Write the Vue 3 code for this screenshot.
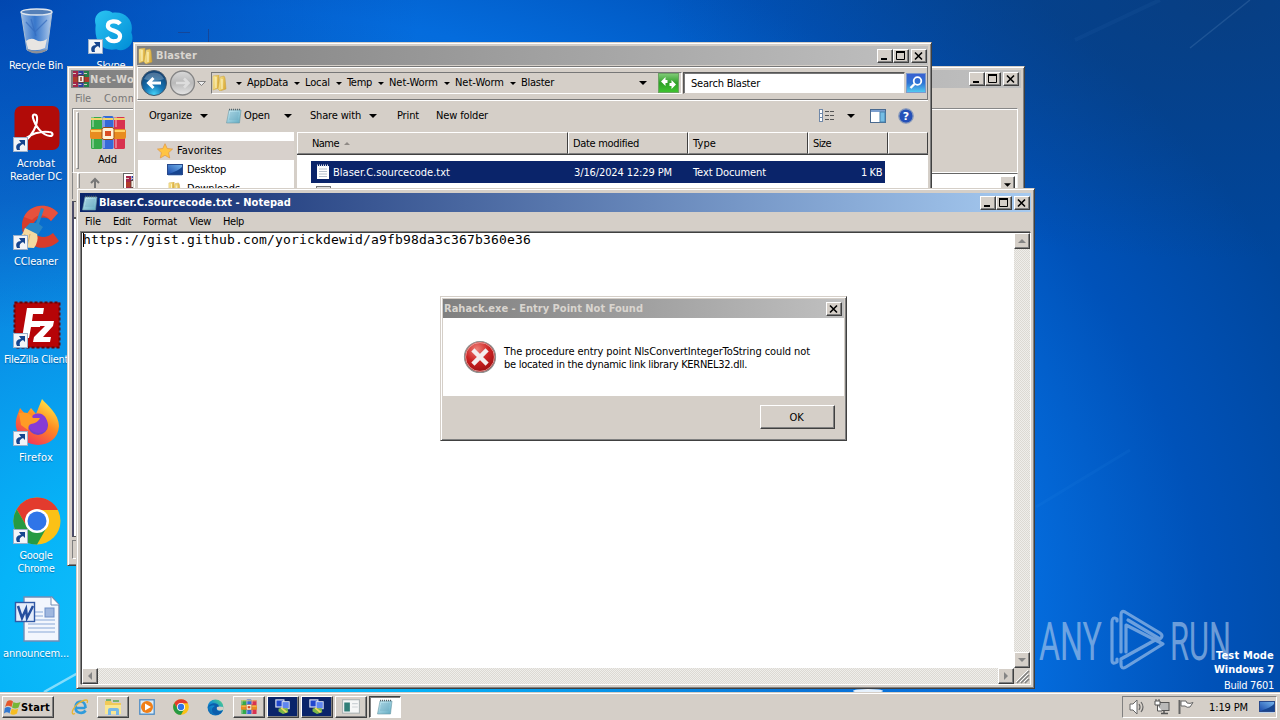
<script setup>
const fit = (el, { value }) => {
  el.style.letterSpacing = '0px'
  const range = document.createRange()
  range.selectNodeContents(el)
  const natural = range.getBoundingClientRect().width
  const count = el.textContent.length
  el.style.letterSpacing = (value - natural) / count + 'px'
  el.style.width = value + 'px'
}
const vFit = { mounted: fit }

const shortcuts = [
  { id: 'bin', lines: [['Recycle Bin', 54]] },
  { id: 'acrobat', link: true, lines: [['Acrobat', 38], ['Reader DC', 52]] },
  { id: 'ccleaner', link: true, lines: [['CCleaner', 44]] },
  { id: 'filezilla', link: true, lines: [['FileZilla Client', 64]] },
  { id: 'firefox', link: true, lines: [['Firefox', 34]] },
  { id: 'chrome', link: true, lines: [['Google', 33], ['Chrome', 37]] },
  { id: 'word', lines: [['announcem...', 66]] },
]
const crumbs = [['AppData', 41], ['Local', 25], ['Temp', 25], ['Net-Worm', 49], ['Net-Worm', 49], ['Blaster', 33]]
const menus = [['File', 16], ['Edit', 18], ['Format', 34], ['View', 22], ['Help', 21]]
const tasks = [
  { id: 'rar', cls: '' },
  { id: 'remote', cls: 'navy' },
  { id: 'remote', cls: 'navy' },
  { id: 'console', cls: '' },
  { id: 'note', cls: 'pressed' },
]
</script>

<template>
  <main class="desktop">
    <svg class="defs" width="0" height="0">
      <defs>
        <linearGradient id="gFolder" x1="0" x2="1" y1="0" y2="0.3"><stop offset="0" stop-color="#fff3a8" /><stop offset="1" stop-color="#dcae3c" /></linearGradient>
        <linearGradient id="gNote" x1="0" x2="1" y1="0" y2="1"><stop offset="0" stop-color="#cdeef8" /><stop offset="1" stop-color="#5fa9c0" /></linearGradient>
        <linearGradient id="gGlass" x1="0" x2="1"><stop offset="0" stop-color="#cfe2f5" stop-opacity=".75" /><stop offset=".45" stop-color="#5c93d8" stop-opacity=".6" /><stop offset="1" stop-color="#e4effa" stop-opacity=".8" /></linearGradient>
        <linearGradient id="gScreen" x1="0" x2="1" y1="1" y2="0"><stop offset="0" stop-color="#1747a8" /><stop offset="1" stop-color="#77b8ee" /></linearGradient>
        <linearGradient id="gSkype" x1="0" x2="1" y1="0" y2="1"><stop offset="0" stop-color="#2bc4f2" /><stop offset="1" stop-color="#008cd6" /></linearGradient>
        <linearGradient id="gFox" x1=".8" x2=".2" y1="0" y2="1"><stop offset="0" stop-color="#fff04a" /><stop offset=".45" stop-color="#ff8b22" /><stop offset="1" stop-color="#f02b5f" /></linearGradient>
        <linearGradient id="gEdge" x1="0" x2="1" y1="1" y2="0"><stop offset="0" stop-color="#0d59a6" /><stop offset=".5" stop-color="#1391d3" /><stop offset="1" stop-color="#5adb7b" /></linearGradient>
        <radialGradient id="gBack" cx=".5" cy=".95" r=".85"><stop offset="0" stop-color="#45d3f8" /><stop offset=".45" stop-color="#1574b4" /><stop offset="1" stop-color="#104376" /></radialGradient>
        <linearGradient id="gFwd" x1="0" x2="0" y1="0" y2="1"><stop offset="0" stop-color="#d9d9d9" /><stop offset=".5" stop-color="#b9b9b9" /><stop offset="1" stop-color="#e6e6e6" /></linearGradient>
        <radialGradient id="gErr" cx=".4" cy=".25" r=".8"><stop offset="0" stop-color="#ee8078" /><stop offset=".5" stop-color="#cc2222" /><stop offset="1" stop-color="#970d10" /></radialGradient>
        <linearGradient id="gGreen" x1="0" x2="0" y1="0" y2="1"><stop offset="0" stop-color="#82cc79" /><stop offset=".5" stop-color="#2fa028" /><stop offset="1" stop-color="#3fc42f" /></linearGradient>
        <linearGradient id="gFind" x1="0" x2="0" y1="0" y2="1"><stop offset="0" stop-color="#3a5fd0" /><stop offset=".5" stop-color="#2f74d4" /><stop offset="1" stop-color="#54cdf2" /></linearGradient>

        <symbol id="bin" viewBox="0 0 48 48">
          <path d="M8 5 39 5 34 43Q24 48 14 43Z" fill="url(#gGlass)" stroke="#a9bdd2" stroke-width="1" />
          <path d="M13 34Q18 30 23 33T34 32L32 41Q23 45 15 42Z" fill="#e8e5e2" />
          <path d="M13 15 22 25 34 13M18 12 23 29" stroke="#356bbd" stroke-width="1.2" fill="none" opacity=".7" />
          <path d="M14 42Q23 46 34 42L33 44Q23 49 15 44Z" fill="#8c9098" />
          <ellipse cx="23.500" cy="5" rx="15.500" ry="3" fill="#5580b8" stroke="#dfe6ee" stroke-width="1.300" />
        </symbol>
        <symbol id="skype" viewBox="0 0 48 48">
          <path d="M5 17C1 4 15-2 23 4 38 2 46 14 43 25 48 37 37 47 27 43 11 46 3 34 5 17Z" fill="url(#gSkype)" />
          <path d="M31 16C28 12 18 12 18 18S31 22 31 29 20 36 17 30" stroke="#fff" stroke-width="4.500" fill="none" />
        </symbol>
        <symbol id="acrobat" viewBox="0 0 48 48">
          <rect x="1.500" y="1" width="45" height="44" rx="7" fill="#b10b08" />
          <path d="M11 37C19 31 25 20 24 12 23 8 19 9 20 13 22 21 29 30 37 31 41 31 40 27 36 27 28 26 19 29 13 33 8 36 8 40 11 37Z" fill="none" stroke="#fff" stroke-width="2.100" />
        </symbol>
        <symbol id="ccleaner" viewBox="0 0 48 48">
          <path d="M45 10C33-4 9 3 9 23S31 52 46 38L40 30C31 38 20 33 20 24S32 11 38 18Z" fill="#d83c2b" />
          <path d="M45 10C35-2 16 2 11 14L19 17C25 10 33 11 38 18Z" fill="#ec5a45" opacity=".7" />
          <path d="M28 5 31 6 26 21 30 24 24 33 10 27 17 20 23 20Z" fill="#2886c7" />
          <path d="M12 25 24 31Q26 38 21 45L3 44Q0 41 0 38Q9 35 12 25Z" fill="#f4d9a0" />
          <path d="M12 31 8 42M17 31 14 44" stroke="#d5ae6c" />
        </symbol>
        <symbol id="filezilla" viewBox="0 0 48 48">
          <rect x="1.500" y="1.500" width="45" height="45" fill="#b60407" stroke="#6a0205" stroke-width="2" stroke-dasharray="3 2" />
          <rect x="3" y="3" width="42" height="42" fill="#b60407" />
          <path d="M9 37 14 7H31L30 13H20L19 20H28L27 26H18L16 37ZM24 20H41L40 25 30 36H38L37 41H20L21 36 32 25H23Z" fill="#fff" />
        </symbol>
        <symbol id="firefox" viewBox="0 0 48 48">
          <path d="M7 9 13 16 18 9 23 15 29 0C34 6 46 15 46 27 45 51 8 53 3 28 2 20 5 15 7 9Z" fill="url(#gFox)" />
          <circle cx="25" cy="26" r="10" fill="#7041c9" />
          <path d="M20 16C30 11 36 20 34 29 32 36 17 36 16 26Z" fill="#873bd5" />
          <path d="M6 14Q16 12 20 19L27 19Q25 24 18 25 15 26 15 31L8 26Z" fill="#ff9b25" />
        </symbol>
        <symbol id="chrome" viewBox="0 0 48 48">
          <circle cx="24" cy="24" r="23.500" fill="#fbc116" />
          <path d="M24 .5A23.500 23.500 0 0 1 45 13H24L14 30 3.700 12.200A23.500 23.500 0 0 1 24 .5Z" fill="#e33b2e" />
          <path d="M3.700 12.200 14 30 34 30 24 47.500A23.500 23.500 0 0 1 3.700 12.200Z" fill="#269a43" />
          <circle cx="24" cy="24" r="12" fill="#fff" /><circle cx="24" cy="24" r="9.500" fill="#2f75e8" />
        </symbol>
        <symbol id="word" viewBox="0 0 48 48">
          <path d="M11 2H39L46 10V46H11Z" fill="#f2f6fd" stroke="#738db5" stroke-width="1.400" />
          <path d="M38 2V10H46" fill="#fff" stroke="#738db5" />
          <path d="M22 17H30M22 21H30M15 25H42M15 29H42M15 33H42M15 37H42" stroke="#87a7d7" stroke-width="1.200" />
          <rect x="32" y="13" width="9" height="9" fill="#9fb7df" stroke="#6f8fc7" />
          <rect x="2.500" y="7.500" width="19" height="19" fill="#e5edfb" stroke="#3159a6" stroke-width="1.400" />
          <path d="M5 11 9 23 13 14 14 23 20 11" fill="none" stroke="#264f9e" stroke-width="2.500" />
        </symbol>
        <symbol id="rar" viewBox="0 0 36 36">
          <rect x="1" y="2" width="11" height="32" rx="1.500" fill="#35a94a" /><rect x="12.500" y="1" width="11" height="33" rx="1.500" fill="#3569d8" /><rect x="24" y="2" width="11" height="32" rx="1.500" fill="#d8324f" />
          <path d="M3 2V12M14 2V12M26 2V12M3 24V33M14 24V33M26 24V33" stroke="#fff" stroke-opacity=".35" stroke-width="2" />
          <path d="M1 4H12M12.500 4H23M24 4H35" stroke="#f2d36c" stroke-width="2" />
          <rect x="0" y="14" width="36" height="10" rx="2" fill="#e88c20" /><path d="M1 16H35" stroke="#ffd267" stroke-width="2" />
          <rect x="12" y="12.500" width="12" height="12" rx="2" fill="#fff2d5" stroke="#9e4d10" /><rect x="15" y="16" width="6" height="5" fill="#d94d24" />
        </symbol>
        <symbol id="rarsmall" viewBox="0 0 16 16">
          <rect x="0" y="0" width="5" height="16" fill="#a3264a" /><rect x="5.500" y="0" width="5" height="16" fill="#2d3f9f" /><rect x="11" y="0" width="5" height="16" fill="#26804a" />
          <path d="M0 2.500H16M0 13.500H16" stroke="#d9c9c0" stroke-width="1" stroke-dasharray="3 2.500" /><rect y="6" width="16" height="5" fill="#b23b2a" /><rect x="5" y="4.500" width="6" height="7" fill="#f4ece2" stroke="#55302a" stroke-width=".8" /><path d="M8 6V10" stroke="#a03a2a" stroke-width="1.500" />
        </symbol>
        <symbol id="folder" viewBox="0 0 16 16">
          <path d="M1 1 7 0V13L1 15Z" fill="url(#gFolder)" stroke="#d3ad48" stroke-width=".5" /><path d="M8 2 12 1 13 3 14 14 8 16 6 14Z" fill="url(#gFolder)" stroke="#c9a03a" stroke-width=".5" /><path d="M4 2V13M10 4V14" stroke="#fffbd0" stroke-width="1" />
        </symbol>
        <symbol id="note" viewBox="0 0 16 16">
          <path d="M3 2H15L13.500 15H.5Z" fill="url(#gNote)" stroke="#6b98a5" stroke-width=".6" /><path d="M4 5H13M3.500 7H12.500M3.500 9H12M3 11H12" stroke="#70abc0" stroke-width=".7" /><path d="M3 1.500H15" stroke="#53636a" stroke-width="1.500" stroke-dasharray="1 1" />
        </symbol>
        <symbol id="screen" viewBox="0 0 16 14">
          <rect x=".5" y="1.500" width="15" height="10" fill="url(#gScreen)" stroke="#28498b" /><path d="M2 11C6 9 11 8 15 4V11Z" fill="#164590" /><path d="M1 12.500H15" stroke="#b9d1eb" />
        </symbol>
        <symbol id="remote" viewBox="0 0 20 18">
          <rect x="2" y="1" width="9" height="8" fill="#2046ce" stroke="#dfe4ef" stroke-width="1.300" /><rect x="9" y="3" width="8" height="8" fill="#5f86f0" stroke="#dfe4ef" /><path d="M5 11C8 9 10 11 15 10L16 15 10 17 5 14Z" fill="#7bb748" /><path d="M8 10 14 15" stroke="#eed761" stroke-width="2" />
        </symbol>
        <symbol id="console" viewBox="0 0 16 14">
          <rect x=".5" y=".5" width="15" height="12" fill="#f6f7f7" stroke="#adb4b4" /><rect x="2" y="3" width="5" height="8" fill="#317f78" /><path d="M9 4H14M9 7H14" stroke="#cdd3d7" />
        </symbol>
        <symbol id="arrow" viewBox="0 0 15 15"><rect width="15" height="15" fill="#f2f4f8" /><rect x=".5" y=".5" width="14" height="14" fill="none" stroke="#9ab0ca" /><path d="M4 13C2 9 4 6 8 6L6 3H12V9L10 7C7 8 6 10 7 13Z" fill="#15458f" /></symbol>
        <symbol id="min" viewBox="0 0 12 10"><path d="M2 8H8" stroke="#000" stroke-width="2" /></symbol>
        <symbol id="max" viewBox="0 0 12 10"><path d="M1.500 1V8.500H9.500V1" fill="none" stroke="#000" /><path d="M1 1H10" stroke="#000" stroke-width="2" /></symbol>
        <symbol id="close" viewBox="0 0 12 10"><path d="M2 1.500 9 8.500M9 1.500 2 8.500" stroke="#000" stroke-width="1.600" /></symbol>
        <symbol id="caret" viewBox="0 0 8 4"><path d="M0 0H8L4 4Z" fill="#000" /></symbol>
      </defs>
    </svg>

    <svg class="streaks" viewBox="0 0 1280 692">
      <path d="M44 692 110 655" stroke="#d3f6ff" stroke-width="2.500" opacity=".6" />
      <path d="M1190 48 1250 0" stroke="#6e9bcc" stroke-width="1.500" opacity=".22" /><path d="M1075 40 1160 0" stroke="#3c78bd" stroke-width="4" opacity=".1" />
      <path d="M1036 507 1130 450" stroke="#3b9bf0" stroke-width="3" opacity=".08" />
      <path d="M178 32.500H190M208.500 29V42" stroke="#1c3f88" opacity=".7" />
      <ellipse cx="868" cy="691" rx="15" ry="2" fill="#fff" opacity=".9" />
    </svg>

    <nav class="shortcuts">
      <div v-for="s in shortcuts" :key="s.id" class="shortcut">
        <div class="pic"><svg :class="['big', s.id]"><use :href="'#' + s.id" /></svg><svg v-if="s.link" class="link"><use href="#arrow" /></svg></div>
        <span v-for="l in s.lines" :key="l[0]" v-fit="l[1]" class="t">{{ l[0] }}</span>
      </div>
    </nav>
    <div class="shortcut skype">
      <div class="pic"><svg class="big"><use href="#skype" /></svg><svg class="link"><use href="#arrow" /></svg></div>
      <span v-fit="29" class="t">Skype</span>
    </div>

    <svg class="watermark" viewBox="0 0 194 70">
      <g fill="#b3cdec" opacity=".6">
        <text x="1" y="54" textLength="63" lengthAdjust="spacingAndGlyphs">ANY</text>
        <text x="132" y="54" textLength="61" lengthAdjust="spacingAndGlyphs">RUN</text>
      </g>
      <path d="M79 15V13Q74 10 74 16V54Q74 59 79 56V53M83 46V9Q83 4 87 6L122 27Q126 30 122 33L90 14M88 46V19L125 38 88 61Q83 64 83 58V53L119 33" fill="none" stroke="#b3cdec" stroke-width="3.200" stroke-linejoin="round" stroke-linecap="round" opacity=".6" />
    </svg>
    <aside class="build">
      <b v-fit="58" class="t">Test Mode</b><b v-fit="60" class="t">Windows 7</b><span v-fit="50" class="t">Build 7601</span>
    </aside>

    <section class="win rarwin">
      <header class="title inactive"><svg class="i16"><use href="#rarsmall" /></svg><b v-fit="50" class="t">Net-Wor</b>
        <div class="ctl"><i v-for="c in ['min', 'max', 'close']" :key="c" :class="c"><svg><use :href="'#' + c" /></svg></i></div>
      </header>
      <div class="rarmenu"><span v-fit="16" class="t">File</span><span v-fit="59" class="t">Commands</span></div>
      <div class="rartools"><span class="grip"></span><div class="add"><svg><use href="#rar" /></svg><span v-fit="19" class="t">Add</span></div></div>
      <div class="raraddr"><span class="grip"></span>
        <svg class="up" viewBox="0 0 12 12"><path d="M6 11V2M2 6 6 2 10 6" fill="none" stroke="#777" stroke-width="2" /></svg>
        <div class="field"><svg class="i16"><use href="#rarsmall" /></svg><i class="raise drop"><svg><use href="#caret" /></svg></i></div>
      </div>
      <div class="rarlist"><div class="rarhead"></div></div>
      <div class="rarstatus"><span></span></div>
    </section>

    <section class="win explorer">
      <header class="title inactive"><svg class="i16 fold"><use href="#folder" /></svg><b v-fit="41" class="t">Blaster</b>
        <div class="ctl"><i v-for="c in ['min', 'max', 'close']" :key="c" :class="c"><svg><use :href="'#' + c" /></svg></i></div>
      </header>
      <div class="navbar">
        <svg class="travel" viewBox="0 0 70 30">
          <circle cx="16" cy="15" r="12.500" fill="url(#gBack)" stroke="#40566b" /><path d="M6 11A11 11 0 0 1 26 11Q16 15 6 11Z" fill="#fff" opacity=".25" />
          <path d="M23 15H11M15.500 10 10.500 15 15.500 20" fill="none" stroke="#fff" stroke-width="3" />
          <circle cx="44.500" cy="15" r="12" fill="url(#gFwd)" stroke="#858585" stroke-width="1.300" /><path d="M38 15H50M46 10.500 50.500 15 46 19.500" fill="none" stroke="#ddd" stroke-width="2.600" />
          <path d="M59.500 13.500H67.500L63.500 17.500Z" fill="#eee" stroke="#777" stroke-width=".9" />
        </svg>
        <div class="address">
          <svg class="i16"><use href="#folder" /></svg>
          <template v-for="(c, i) in crumbs" :key="i"><svg class="sep"><use href="#caret" /></svg><span v-fit="c[1]" class="t">{{ c[0] }}</span></template>
          <svg class="sep last"><use href="#caret" /></svg>
          <svg class="refresh" viewBox="0 0 21 20"><rect x=".5" y=".5" width="20" height="19" fill="url(#gGreen)" stroke="#6ba362" /><path d="M3 8.500 7.500 4V7H9.500V10H7.500V13ZM18 11.500 13.500 16V13H11.500V10H13.500V7Z" fill="#fff" /></svg>
        </div>
        <div class="search"><span v-fit="69" class="t">Search Blaster</span></div>
        <svg class="find" viewBox="0 0 20 20"><rect x=".5" y=".5" width="19" height="19" fill="url(#gFind)" stroke="#7c99cd" /><circle cx="11.500" cy="8" r="3.800" fill="none" stroke="#fff" stroke-width="1.800" /><path d="M8.500 11 4.500 15" stroke="#fff" stroke-width="2.400" /></svg>
      </div>
      <div class="tools">
        <span v-fit="43" class="t">Organize</span><svg class="dd"><use href="#caret" /></svg>
        <svg class="i16 nt"><use href="#note" /></svg><span v-fit="26" class="t">Open</span><svg class="dd far"><use href="#caret" /></svg>
        <span v-fit="51" class="t share">Share with</span><svg class="dd"><use href="#caret" /></svg>
        <span v-fit="22" class="t print">Print</span><span v-fit="52" class="t newf">New folder</span>
        <div class="right">
          <svg width="16" height="13" viewBox="0 0 16 13"><rect x=".5" y=".5" width="3" height="12" fill="#fff" stroke="#7088a8" /><path d="M1 4.500H3M1 8.500H3" stroke="#7088a8" /><path d="M6 2.500H10M11 2.500H15M6 6.500H10M11 6.500H15M6 10.500H10M11 10.500H15" stroke="#555" /></svg>
          <svg class="dd v"><use href="#caret" /></svg>
          <svg class="pane" width="16" height="14" viewBox="0 0 16 14"><rect x=".5" y=".5" width="15" height="13" fill="#fff" stroke="#49698f" /><path d="M1 2H15" stroke="#7c9fce" stroke-width="2" /><rect x="10" y="3" width="5" height="10" fill="#75bde4" stroke="#4a83ae" /></svg>
          <svg class="help" width="16" height="16" viewBox="0 0 16 16"><circle cx="8" cy="8" r="7.200" fill="#2450b8" stroke="#8799bb" stroke-width="1.300" /><text x="8" y="12.200" text-anchor="middle">?</text></svg>
        </div>
      </div>
      <div class="body">
        <div class="tree">
          <div class="fav"><svg width="16" height="16" viewBox="0 0 16 16"><path d="M8 .7 10.200 5.500 15.500 6.100 11.600 9.700 12.700 15 8 12.300 3.300 15 4.400 9.700.5 6.100 5.800 5.500Z" fill="#ffc443" stroke="#e39a48" stroke-width=".8" /></svg><span v-fit="45" class="t">Favorites</span></div>
          <div class="node"><svg><use href="#screen" /></svg><span v-fit="39" class="t">Desktop</span></div>
          <div class="node"><svg><use href="#folder" /></svg><span v-fit="53" class="t">Downloads</span></div>
        </div>
        <div class="list">
          <div class="cols"><div><span v-fit="27" class="t">Name</span><svg class="sort" viewBox="0 0 6 3"><path d="M0 3H6L3 0Z" fill="#8f8a85" /></svg></div><div><span v-fit="66" class="t">Date modified</span></div><div><span v-fit="23" class="t">Type</span></div><div><span v-fit="18" class="t">Size</span></div><div></div></div>
          <div class="row">
            <svg class="doc" viewBox="0 0 14 16"><path d="M1 2H13V15H1Z" fill="#fff" /><path d="M1 1.500H13" stroke="#d8dce8" stroke-width="2" stroke-dasharray="1 1" /><path d="M3 5H11M3 7.500H11M3 10H11M3 12.500H11" stroke="#b6c0cc" /></svg>
            <span v-fit="117" class="t name">Blaser.C.sourcecode.txt</span><span v-fit="98" class="t date">3/16/2024 12:29 PM</span><span v-fit="73" class="t kind">Text Document</span><span v-fit="21" class="t size">1 KB</span>
          </div>
          <div class="peek"></div>
        </div>
      </div>
    </section>

    <section class="win notepad">
      <header class="title active"><svg class="i16"><use href="#note" /></svg><b v-fit="192" class="t">Blaser.C.sourcecode.txt - Notepad</b>
        <div class="ctl"><i v-for="c in ['min', 'max', 'close']" :key="c" :class="c"><svg><use :href="'#' + c" /></svg></i></div>
      </header>
      <div class="menu"><span v-for="m in menus" :key="m[0]" v-fit="m[1]" class="t">{{ m[0] }}</span></div>
      <div class="edit">
        <div class="paper"><span v-fit="448" class="mono">https://gist.github.com/yorickdewid/a9fb98da3c367b360e36</span></div>
        <div class="vbar"><i class="raise"><svg viewBox="0 0 8 4"><path d="M0 4H8L4 0Z" fill="#858585" /></svg></i><i class="raise"><svg viewBox="0 0 8 4"><path d="M0 0H8L4 4Z" fill="#858585" /></svg></i></div>
        <div class="hbar"><i class="raise"><svg class="side" viewBox="0 0 4 8"><path d="M4 0V8L0 4Z" fill="#858585" /></svg></i><i class="raise"><svg class="side" viewBox="0 0 4 8"><path d="M0 0V8L4 4Z" fill="#858585" /></svg></i></div>
        <svg class="sizer" viewBox="0 0 16 16"><path d="M3 15 15 3M7 15 15 7M11 15 15 11" stroke="#808080" stroke-width="1.500" /><path d="M2 14 14 2M6 14 14 6M10 14 14 10" stroke="#fff" /></svg>
      </div>
    </section>

    <section class="win dialog">
      <header class="title inactive"><b v-fit="199" class="t">Rahack.exe - Entry Point Not Found</b><div class="ctl"><i class="close"><svg><use href="#close" /></svg></i></div></header>
      <div class="message">
        <svg width="34" height="34" viewBox="0 0 34 34"><circle cx="17" cy="17" r="15.500" fill="url(#gErr)" stroke="#8f9291" stroke-width="1.200" /><circle cx="17" cy="17" r="14.400" fill="none" stroke="#e8b0ac" stroke-width=".8" /><path d="M11.500 11.500 22.500 22.500M22.500 11.500 11.500 22.500" stroke="#f4eeee" stroke-width="4.500" stroke-linecap="square" /></svg>
        <p><span v-fit="306" class="t">The procedure entry point NlsConvertIntegerToString could not</span><span v-fit="243" class="t">be located in the dynamic link library KERNEL32.dll.</span></p>
      </div>
      <footer><button><span v-fit="14" class="t">OK</span></button></footer>
    </section>

    <footer class="taskbar">
      <button class="start"><svg width="17" height="17" viewBox="0 0 17 17"><path d="M3 2.500Q6 0 9 2.500L7.500 8Q4 5.500 1 8Z" fill="#e4572a" /><path d="M9.500 3Q12 5 16.500 3L14.500 8.500Q11 10.500 8 8.500Z" fill="#76b637" /><path d="M.8 9Q4 7 7 9L5.500 14.500Q3 12 0 14.500Z" fill="#3178d0" /><path d="M7.800 9.500Q11 11.500 14.200 9.500L13 14.500Q9 17 6.300 14.800Z" fill="#f6bd21" /></svg><b v-fit="29" class="t">Start</b></button>
      <div class="quick">
        <span><svg width="18" height="18" viewBox="0 0 18 18"><path d="M14.500 10H5M4.500 9.500C4.500 5 7.500 3.500 9.500 3.500 12.500 3.500 14.500 6 14.500 10M4.500 9.500C4.500 16 12.500 16 14.500 12.500" fill="none" stroke="#309bdb" stroke-width="2.700" /><path d="M4 15.500C-1 18 1 10 8 5 14 1 18 1 16 5" fill="none" stroke="#e7b430" stroke-width="1.300" /></svg></span>
        <span class="raise open"><svg width="18" height="18" viewBox="0 0 18 18"><path d="M1 3H7L8 5H17V16H1Z" fill="#f1c958" /><path d="M2 2H7M9 3H15" stroke="#58a952" stroke-width="1.500" /><path d="M1 7H17V16H1Z" fill="#fae792" /><path d="M4 17V12Q4 10 6 10H13Q15 10 15 12V17H12V13H7V17Z" fill="#78b8e8" /></svg></span>
        <span><svg width="16" height="16" viewBox="0 0 16 16"><rect x=".8" y=".8" width="14.400" height="14.400" fill="#dcecf7" stroke="#4a8ac4" stroke-width="1.300" /><circle cx="8" cy="8" r="6" fill="#f07f17" /><path d="M6 4.500 12 8 6 11.500Z" fill="#fff" /></svg></span>
        <span><svg width="16" height="16"><use href="#chrome" /></svg></span>
        <span><svg width="17" height="17" viewBox="0 0 17 17"><circle cx="8.500" cy="8.500" r="8" fill="url(#gEdge)" /><path d="M1 9C2 3 12 3 12 8 12 10 10 10 10 11 11 13 15 12 16 11 13 18 5 17 5 11 5 8 8 7 8 7 5 6 2 7 1 9Z" fill="#0c5dac" /><path d="M10 8Q12 7 16.500 8Q17 12 12 11.500 9 11 10 8Z" fill="#d5cfc8" /></svg></span>
      </div>
      <div class="tasks"><span v-for="(t, i) in tasks" :key="i" :class="['raise', t.cls]"><svg :class="t.id"><use :href="'#' + t.id" /></svg></span></div>
      <div class="tray">
        <svg width="17" height="16" viewBox="0 0 17 16"><path d="M1 5H4L8 1V15L4 11H1Z" fill="#fff" stroke="#666" /><path d="M10 5Q12 8 10 11M12 3Q16 8 12 13" fill="none" stroke="#666" stroke-width="1.200" /></svg>
        <svg width="16" height="16" viewBox="0 0 16 16"><rect x="5" y="3.500" width="10" height="8" fill="#b9b9b9" stroke="#555" /><path d="M7 14.500H14M10 12V14" stroke="#555" stroke-width="1.500" /><path d="M1 2H6V6H1ZM2 0V2M5 0V2M3.500 6V12H8" fill="#fff" stroke="#555" /></svg>
        <svg width="16" height="16" viewBox="0 0 16 16"><path d="M1.500 1V15" stroke="#666" stroke-width="2" /><path d="M3 2H8L9 4Q12 5 15 3.500L12 8Q9 9 7 7H3Z" fill="#fff" stroke="#666" /></svg>
        <span v-fit="39" class="t">1:19 PM</span>
        <svg class="show"><use href="#screen" /></svg>
      </div>
    </footer>
  </main>
</template>

<style>
html, body { overflow: hidden; background: #0058c0; }
</style>

<style scoped>
* { box-sizing: border-box; }
.desktop {
  position: relative; width: 1280px; height: 720px; overflow: hidden;
  font: 11px/13px "DejaVu Sans Condensed", "DejaVu Sans", sans-serif; font-stretch: condensed; color: #000;
  background:
    radial-gradient(ellipse 420px 330px at 0 0, rgba(0, 50, 150, .6), rgba(0, 60, 160, 0)),
    radial-gradient(ellipse 560px 260px at 1220px 0, rgba(14, 56, 110, .55), rgba(14, 56, 110, 0)),
    radial-gradient(ellipse 1050px 800px at 200px 640px, #18c4fc 0, #06b4f8 20%, #08a0ef 32%, #0b75d8 58%, #046cdd 79%, #0052b9 96%, #00469c 113%);
}
.t { display: block; white-space: nowrap; flex: none; }
svg { display: block; flex: none; }
.defs { position: absolute; }
.streaks { position: absolute; inset: 0; width: 1280px; height: 692px; }
.i16 { width: 16px; height: 16px; }

.shortcuts { position: absolute; left: 0; top: 7px; width: 74px; display: flex; flex-direction: column; }
.shortcut { height: 98px; width: 74px; display: flex; flex-direction: column; align-items: center; color: #fff; padding-right: 2px; }
.shortcut .t { text-shadow: 0 1px 1px rgba(0, 30, 80, .4); }
.pic { position: relative; width: 48px; height: 48px; margin-bottom: 4px; left: 1px; }
.big { width: 48px; height: 48px; }
.link { position: absolute; left: 0; bottom: 1px; width: 15px; height: 15px; }
.skype { position: absolute; left: 75px; top: 7px; }
.skype .big { width: 45px; height: 45px; margin: 2px 0 0 3px; }
.watermark { position: absolute; left: 1038px; top: 606px; width: 194px; height: 70px; overflow: visible; font: 400 54px Roboto, sans-serif; }
.build { position: absolute; right: 6px; top: 649px; display: flex; flex-direction: column; align-items: flex-end; color: #fff; gap: 1px; }
.build span { margin-top: 2px; }

.win { position: absolute; background: #d5cfc8; border: 1px solid; border-color: #d5cfc8 #404040 #404040 #d5cfc8; box-shadow: inset 1px 1px #fff, inset -1px -1px #808080; padding: 3px; display: flex; flex-direction: column; }
.title { display: flex; align-items: center; height: 19px; flex: none; padding-left: 2px; color: #d9d5cf; }
.title .t { margin-left: 1px; }
.inactive { background: linear-gradient(90deg, #808080, #c0c0c0); }
.active { background: linear-gradient(90deg, #0a246a, #a6caf0); color: #fff; }
.ctl { margin-left: auto; margin-right: 2px; display: flex; }
.ctl i, .raise { display: flex; align-items: center; justify-content: center; background: #d5cfc8; border: 1px solid; border-color: #fff #404040 #404040 #fff; box-shadow: inset -1px -1px #808080; flex: none; }
.ctl i { width: 16px; height: 14px; }
.ctl i svg { width: 12px; height: 10px; }
.ctl .max + .close { margin-left: 2px; }

.rarwin { left: 67px; top: 66px; width: 958px; height: 500px; }
.rarwin .title { height: 18px; }
.rarmenu { display: flex; gap: 13px; padding: 4px 0 0 4px; height: 20px; color: #777; }
.rartools { margin: 0 3px 0 1px; border: 1px solid; border-color: #888 #fff #fff #888; box-shadow: inset 1px 1px #fff; height: 65px; display: flex; padding: 3px; flex: none; }
.grip { width: 3px; height: 57px; border: 1px solid; border-color: #fff #888 #888 #fff; }
.add { margin-left: 10px; width: 37px; display: flex; flex-direction: column; align-items: center; }
.add svg { width: 36px; height: 36px; margin: 3px 0 2px; }
.raraddr { display: flex; height: 26px; margin: 0 3px 0 1px; padding-left: 4px; border-left: 1px solid #888; flex: none; }
.raraddr .grip { height: 24px; }
.up { width: 14px; height: 12px; margin: 4px 0 0 8px; }
.field { flex: 1; margin: 0 0 0 21px; background: #fff; border: 1px solid; border-color: #666 #eee #eee #666; padding: 2px; display: flex; justify-content: space-between; height: 23px; }
.drop { width: 15px; height: 17px; }
.drop svg { width: 7px; height: 4px; }
.rarlist { flex: 1; background: #fff; margin: 2px 3px 2px 1px; border: 1px solid #555; border-left: 2px solid #4b4b68; }
.rarhead { height: 17px; background: #d5cfc8; border-bottom: 2px solid #555; }
.rarstatus { height: 23px; padding: 1px; }
.rarstatus span { display: block; height: 19px; border: 1px solid; border-color: #808080 #fff #fff #808080; }

.explorer { left: 133px; top: 42px; width: 799px; height: 260px; }
.explorer .title .t { margin-left: 1px; }
.explorer .ctl { margin-right: 1px; }
.notepad .ctl { margin-right: 1px; }
.fold { margin-left: -1px; }
.explorer .fold + .t { margin-left: 2px; }
.navbar { display: flex; align-items: center; height: 34px; margin-top: 1px; border: 1px solid; border-color: #777 #777 #777 #fff; box-shadow: 0 1px #fff, inset 0 1px #fff; flex: none; }
.travel { width: 70px; height: 30px; margin-left: 0; }
.address { width: 471px; height: 22px; margin-left: 3px; border: 1px solid; border-color: #777 #fff #fff #777; display: flex; align-items: center; padding-left: 0; }
.address .t { margin-top: -2px; }
.sep { width: 6px; height: 3px; margin: 0 5px 0 6px; }
.address .i16 + .sep { margin-left: 8px; }
.last { width: 8px; height: 4px; margin: 0 0 0 auto; }
.refresh { width: 21px; height: 20px; margin: 0 2px 0 11px; }
.search { margin-left: 1px; width: 222px; height: 22px; background: #fff; border: 1px solid; border-color: #555 #d5cfc8 #d5cfc8 #555; box-shadow: inset 1px 1px #777; padding: 4px 0 0 7px; }
.find { width: 20px; height: 20px; margin-left: 1px; }
.tools { display: flex; align-items: center; height: 31px; padding-left: 12px; margin-top: 0; margin-bottom: 1px; flex: none; }
.dd { width: 8px; height: 4px; margin-left: 8px; }
.nt { margin: 0 2px 0 18px; }
.far { margin-left: 14px; }
.share { margin-left: 18px; }
.print { margin-left: 20px; }
.newf { margin-left: 17px; }
.right { display: flex; align-items: center; margin-left: auto; margin-right: 14px; }
.right .v { margin-left: 12px; }
.pane { margin-left: 15px; }
.help { margin-left: 12px; font: bold 11px "DejaVu Sans", sans-serif; fill: #fff; }
.body { display: flex; flex: 1; min-height: 0; }
.tree { width: 156px; background: #fff; margin-left: 1px; padding-top: 9px; }
.fav { height: 19px; background: #d8d1cc; display: flex; align-items: center; padding-left: 19px; gap: 4px; }
.node { display: flex; align-items: center; height: 19px; padding-left: 29px; gap: 4px; }
.node svg { width: 16px; height: 14px; }
.list { flex: 1; margin-left: 3px; background: #fff; min-width: 0; }
.cols { display: grid; grid-template-columns: 271px 120px 120px 80px 1fr; height: 23px; background: #d5cfc8; border-bottom: 1px solid #404040; }
.cols div { border: 1px solid; border-color: #fff #404040 #808080 #fff; display: flex; align-items: center; padding-left: 4px; }
.cols div:first-child { padding-left: 14px; }
.sort { width: 6px; height: 3px; margin-left: 5px; }
.row { display: flex; align-items: center; width: 574px; height: 22px; margin: 6px 0 0 14px; background: #0a246a; color: #fff; }
.doc { width: 14px; height: 16px; margin-left: 5px; }
.name { margin-left: 3px; }
.date { margin-left: 124px; }
.kind { margin-left: 21px; }
.size { margin-left: auto; margin-right: 3px; }
.peek { width: 15px; height: 12px; margin: 3px 0 0 19px; background: #ddd; border: 1px solid #777; }

.notepad { left: 76px; top: 188px; width: 959px; height: 501px; }
.notepad .title { margin-top: 1px; }
.menu { display: flex; gap: 12px; padding: 3px 0 0 5px; height: 20px; flex: none; }
.edit { flex: 1; display: grid; grid-template-columns: 1fr 16px; grid-template-rows: 1fr 16px; border: 1px solid; border-color: #404040 #fff #fff #404040; box-shadow: -1px -1px #808080; margin: 0 0 0 1px; background: #d5cfc8; }
.paper { background: #fff; }
.mono { display: block; height: 14px; margin: 0 0 0 1px; font: 13px/14px "DejaVu Sans Mono", monospace; white-space: nowrap; box-shadow: inset 1px 0 #000; }
.vbar, .hbar { display: flex; justify-content: space-between; background: repeating-conic-gradient(#dcd9d3 0 25%, #efeeeb 0 50%) 0 0 / 2px 2px; }
.vbar { flex-direction: column; }
.vbar i, .hbar i { width: 16px; height: 16px; }
.vbar svg { width: 8px; height: 4px; }
.vbar svg.side, .side { width: 4px; height: 8px; }
.sizer { width: 16px; height: 16px; }

.dialog { left: 440px; top: 296px; width: 407px; height: 145px; padding: 2px; }
.dialog .title { padding-left: 1px; height: 19px; }
.dialog .title .t { margin-left: 0; }
.message { background: #fff; height: 78px; display: flex; align-items: flex-start; padding: 22px 0 0 20px; flex: none; }
.message p { margin: 5px 0 0 7px; }
.dialog footer { display: flex; justify-content: flex-end; padding: 9px 9px 0 0; }
button { font: inherit; padding: 0; color: #000; background: #d5cfc8; border: 1px solid; border-color: #fff #404040 #404040 #fff; box-shadow: inset -1px -1px #808080; display: flex; align-items: center; justify-content: center; }
.dialog button { width: 75px; height: 24px; padding-right: 2px; }

.taskbar { position: absolute; left: 0; right: 0; bottom: 0; height: 28px; background: #d5cfc8; box-shadow: inset 0 1px #d5cfc8, inset 0 2px #fff; display: flex; padding-top: 4px; }
.start { width: 52px; height: 22px; margin-left: 2px; justify-content: flex-start; padding-left: 1px; gap: 0; }
.quick { display: flex; margin-left: 9px; height: 22px; }
.quick span { width: 34px; display: flex; align-items: center; justify-content: center; }
.quick .open { width: 32px; margin: 0 1px 0 0; }
.tasks { display: flex; gap: 2px; margin-left: 1px; height: 22px; }
.tasks span { width: 32px; }
.tasks svg { width: 18px; height: 16px; }
.tasks .navy { background: #0a246a; }
.tasks .pressed { background: #fff; border-color: #404040 #fff #fff #404040; box-shadow: inset 1px 1px #808080; }
.tray { margin-left: auto; margin-right: 3px; width: 155px; height: 22px; border: 1px solid; border-color: #808080 #fff #fff #808080; display: flex; align-items: center; padding-left: 6px; gap: 8px; }
.tray .t { margin-left: 7px; }
.show { width: 16px; height: 14px; margin-left: 3px; }
</style>
